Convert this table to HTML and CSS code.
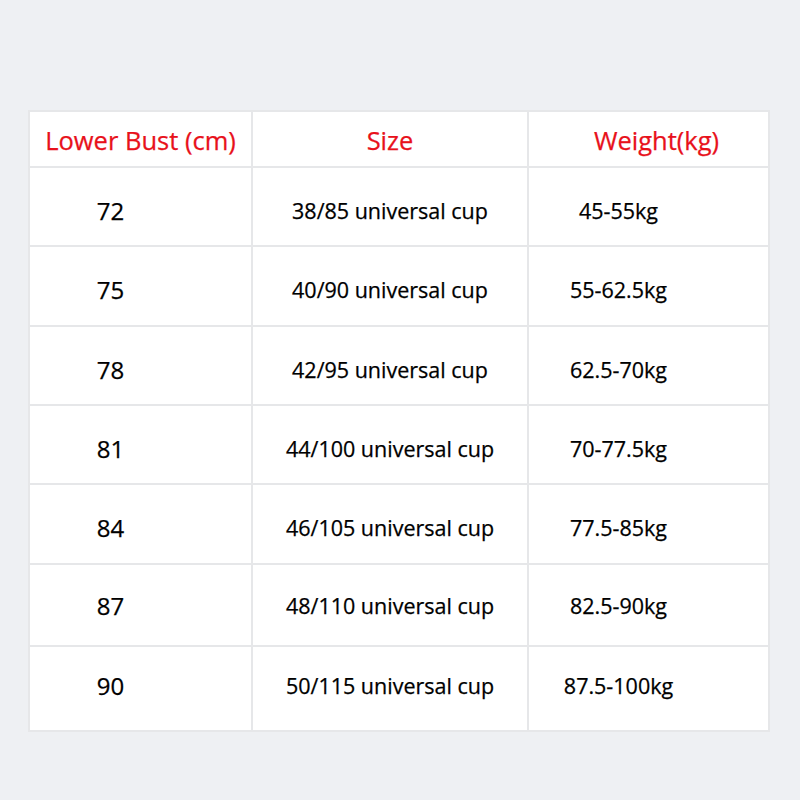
FILE: index.html
```html
<!DOCTYPE html>
<html>
<head>
<meta charset="utf-8">
<link rel="stylesheet" href="styles.css">
</head>
<body>
<div class="sheet">
  <div class="grid">
    <div class="cell head c1">Lower Bust (cm)</div>
    <div class="cell head c2">Size</div>
    <div class="cell head c3">Weight(kg)</div>

    <div class="cell c1">72</div>
    <div class="cell c2">38/85 universal cup</div>
    <div class="cell c3">45-55kg</div>

    <div class="cell c1">75</div>
    <div class="cell c2">40/90 universal cup</div>
    <div class="cell c3">55-62.5kg</div>

    <div class="cell c1">78</div>
    <div class="cell c2">42/95 universal cup</div>
    <div class="cell c3">62.5-70kg</div>

    <div class="cell c1">81</div>
    <div class="cell c2">44/100 universal cup</div>
    <div class="cell c3">70-77.5kg</div>

    <div class="cell c1">84</div>
    <div class="cell c2">46/105 universal cup</div>
    <div class="cell c3">77.5-85kg</div>

    <div class="cell c1 tall">87</div>
    <div class="cell c2 tall">48/110 universal cup</div>
    <div class="cell c3 tall">82.5-90kg</div>

    <div class="cell c1 last">90</div>
    <div class="cell c2 last">50/115 universal cup</div>
    <div class="cell c3 last">87.5-100kg</div>
  </div>
</div>
</body>
</html>
```

FILE: styles.css
```css
html, body {
  margin: 0;
  padding: 0;
  background: #eef0f3;
}
body {
  width: 800px;
  height: 800px;
  font-family: "Open Sans", "Noto Sans", sans-serif;
}
.sheet {
  padding: 110px 0 0 28px;
}
.grid {
  display: grid;
  width: 742px;
  box-sizing: border-box;
  grid-template-columns: 221px 274px 239px;
  grid-template-rows: 54px 77px 78px 77px 77px 78px 80px 83px;
  gap: 2px;
  padding: 2px;
  background: #e6e7e9;
}
.cell {
  background: #ffffff;
  display: flex;
  align-items: center;
  justify-content: center;
  color: #000;
  font-size: 21.5px;
  font-weight: 400;
  -webkit-text-stroke: 0.25px #000;
  padding-top: 7px;
  box-sizing: border-box;
}
.tall {
  padding-top: 1px;
}
.last {
  padding-top: 0;
  padding-bottom: 7px;
}
.head {
  color: #e8111b;
  -webkit-text-stroke: 0.25px #e8111b;
  font-size: 25.5px;
  padding-top: 2px;
}
.c1 {
  padding-right: 60px;
  font-size: 24px;
}
.head.c1 {
  padding-right: 0;
  font-size: 25.5px;
}
.c3 {
  padding-right: 60px;
}
.head.c3 {
  padding-right: 0;
  padding-left: 16px;
}
```
